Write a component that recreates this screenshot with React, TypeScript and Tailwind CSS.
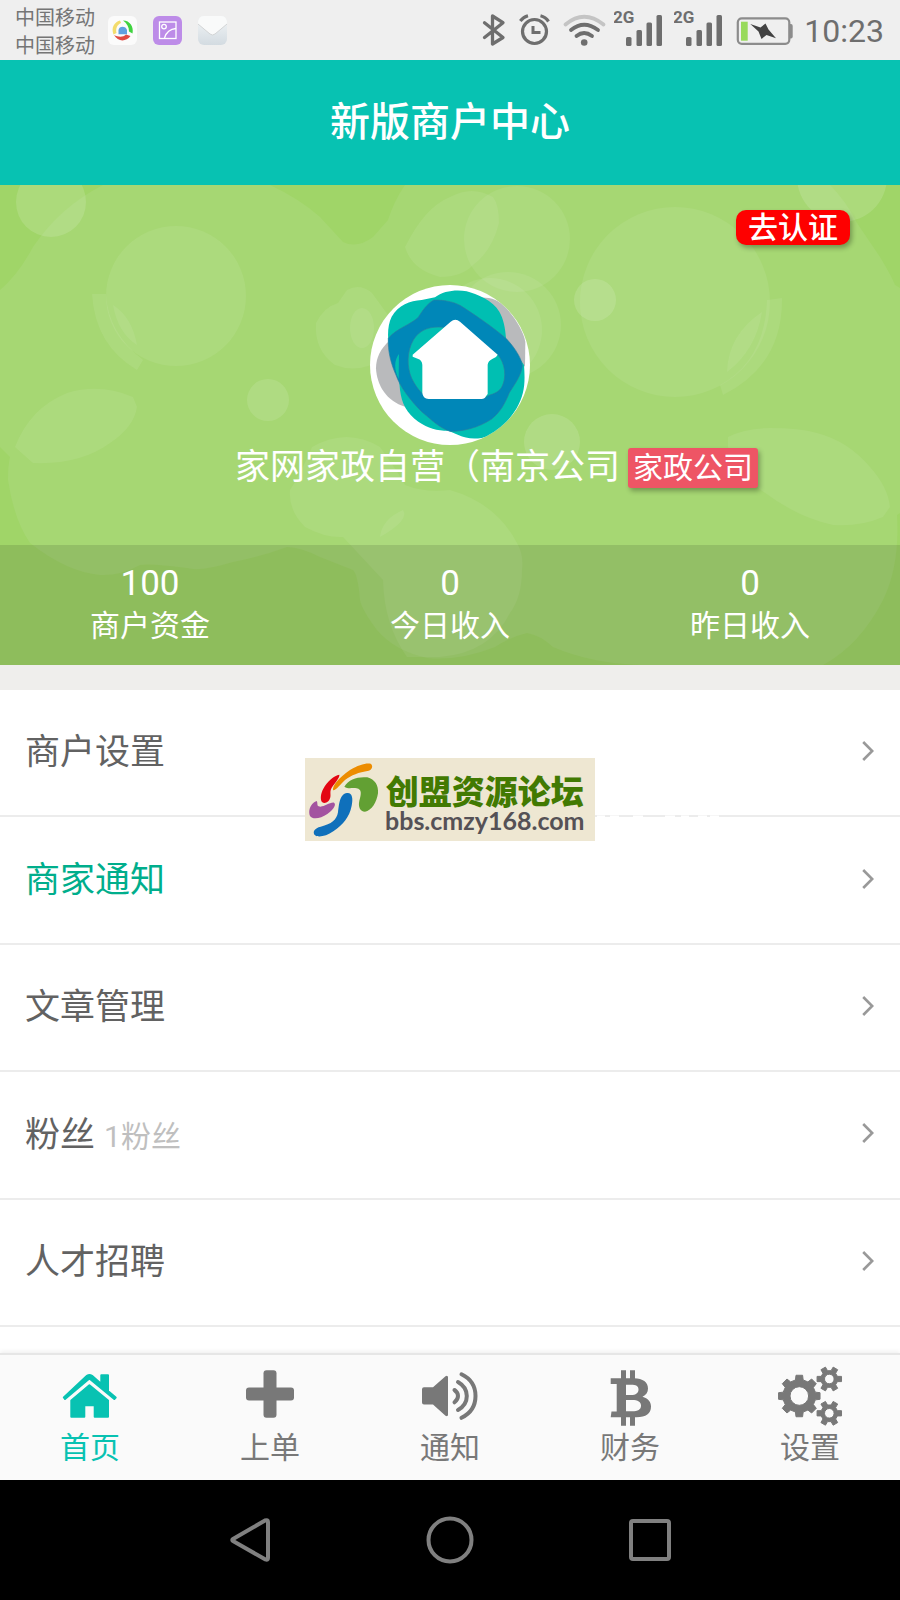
import type { ReactNode } from "react";

/* ---------- status bar ---------- */

function CallAppIcon() {
  return (
    <svg viewBox="0 0 29 29" className="size-[29px]" aria-hidden="true">
      <rect width="29" height="29" rx="6" fill="#fbfbfb" />
      <path d="M12 4.500C6 6 3 12 5.500 18.500L8.500 17C7.500 13 9 8.500 13 7Z" fill="#f3dc6c" />
      <path d="M15 4.500C22 4.500 26 11 24.500 17.500L21 15.500C21 11 19 7.500 15 4.500Z" fill="#3fd33f" />
      <path d="M6 19C10 26 18 26 22.500 20L18 18.500C15 21.500 10 21 6 19Z" fill="#e04a42" />
      <path d="M10.500 18.200V14C11 9.500 18 9.500 19 14V18.200Z" fill="#5fa0e0" />
    </svg>
  );
}

function GalleryIcon() {
  return (
    <svg viewBox="0 0 29 29" className="size-[29px]" fill="none" stroke="#fff" strokeWidth="1.300" aria-hidden="true">
      <rect width="29" height="29" rx="6" fill="#bd8ce8" stroke="none" />
      <rect x="6.500" y="6" width="16.500" height="16.500" />
      <circle cx="11" cy="10.600" r="2.300" />
      <path d="M11.500 22C13 17 17 13 23 12.500" />
    </svg>
  );
}

function MailIcon() {
  return (
    <svg viewBox="0 0 29 29" className="size-[29px]" aria-hidden="true">
      <defs>
        <linearGradient id="mail" x1="0" y1="0" x2="0" y2="1">
          <stop offset="0" stopColor="#f3f6f7" />
          <stop offset="1" stopColor="#d3dbe1" />
        </linearGradient>
      </defs>
      <rect width="29" height="29" rx="6" fill="url(#mail)" />
      <path d="M0 8Q0 0 6 0H23Q29 0 29 8L17 18Q14.500 20 12 18Z" fill="#f9fafa" />
      <path d="M0 8L12 18Q14.500 20 17 18L29 8" fill="none" stroke="#d2d4d5" strokeWidth="1" />
    </svg>
  );
}

function BluetoothIcon() {
  return (
    <svg viewBox="0 0 26 60" className="h-[60px] w-[26px]" fill="none" stroke="#6e6e6e" strokeWidth="3.300" strokeLinejoin="round" strokeLinecap="round" aria-hidden="true">
      <path d="M2.500 22.700L21 37.500L10.500 44V16L21 22.700L2.500 37.500" />
    </svg>
  );
}

function AlarmIcon() {
  return (
    <svg viewBox="0 0 34 60" className="h-[60px] w-[34px]" fill="none" stroke="#6e6e6e" strokeWidth="3.200" aria-hidden="true">
      <circle cx="16.500" cy="31.500" r="12" />
      <path d="M15 26V32.500H22.500" strokeWidth="3" />
      <path d="M2.300 21Q5.500 17 10 15.800M22.500 15.800Q27.500 17 30.500 21.500" />
    </svg>
  );
}

function WifiIcon() {
  return (
    <svg viewBox="0 0 42 60" className="h-[60px] w-[42px] overflow-visible" fill="none" stroke="#6e6e6e" strokeWidth="3.800" strokeLinecap="round" aria-hidden="true">
      <path d="M3.500 24.500Q22 9 41.500 24.500" stroke="#c4c4c4" />
      <path d="M9 30Q22 19.500 36 30" />
      <path d="M14.500 36Q22 30 30 36" />
      <circle cx="22.200" cy="42.500" r="3.300" fill="#6e6e6e" stroke="none" />
    </svg>
  );
}

function SignalIcon() {
  return (
    <svg viewBox="0 0 50 60" className="h-[60px] w-[50px]" fill="#6e6e6e" aria-hidden="true">
      <text x="-1" y="22.500" fontSize="17" fontWeight="700" fontFamily="Roboto, sans-serif">2G</text>
      <rect x="12" y="37" width="5.500" height="9" rx="1.500" />
      <rect x="22.500" y="30" width="5.500" height="16" rx="1.500" />
      <rect x="32.500" y="22.500" width="5.500" height="23.500" rx="1.500" />
      <rect x="42.500" y="15" width="5.500" height="31" rx="1.500" />
    </svg>
  );
}

function BatteryIcon() {
  return (
    <svg viewBox="0 0 60 60" className="size-[60px]" aria-hidden="true">
      <rect x="3.800" y="18.300" width="51.500" height="25.500" rx="4" fill="none" stroke="#8c8c8c" strokeWidth="2.200" />
      <path d="M56 24H57Q58.700 24 58.700 26V36.500Q58.700 38.500 57 38.500H56Z" fill="#8c8c8c" />
      <rect x="7" y="21.700" width="6.700" height="19" fill="#98da5b" />
      <path d="M16.300 24L26.500 27.500L31.500 23.500L34.500 29.500L42 38.200L32.500 35L27.500 39L24.500 31.500Z" fill="#424242" />
    </svg>
  );
}

function StatusBar() {
  return (
    <div className="flex h-[60px] items-center justify-between bg-[#efefef] pr-4 pl-[15px] text-[#757575]">
      <div className="flex items-center gap-4">
        <div className="-mr-[3px] pt-1 text-[20px] leading-7">
          <p>中国移动</p>
          <p>中国移动</p>
        </div>
        <CallAppIcon />
        <GalleryIcon />
        <MailIcon />
      </div>
      <div className="flex items-center gap-[10px]">
        <BluetoothIcon />
        <AlarmIcon />
        <WifiIcon />
        <SignalIcon />
        <SignalIcon />
        <BatteryIcon />
        <span className="pt-[2px] text-[32px] leading-[58px] text-[#6e6e6e]">10:23</span>
      </div>
    </div>
  );
}

/* ---------- merchant card ---------- */

function HeroBackground() {
  return (
    <svg viewBox="0 0 900 480" preserveAspectRatio="xMidYMid slice" className="absolute inset-0 size-full" aria-hidden="true">
      <rect width="900" height="480" fill="#a0d568" />
      <path
        fill="#a6d773"
        d="M0 105Q18 90 33 62Q60 22 103 0H270Q300 14 320 32L343 57Q357 64 373 52L388 35Q394 16 405 0H830Q846 16 857 38L880 72Q892 92 895 100L900 103V328L897 330Q900 380 883 415Q860 460 823 480H640Q590 478 553 462Q540 450 527 448Q510 452 495 462Q460 476 427 473Q395 466 377 445Q362 425 360 415Q358 390 353 385L320 372Q300 362 287 362Q260 372 233 377Q200 387 187 383Q150 378 140 380Q120 391 100 390Q67 387 30 358Q14 335 8 295Q8 280 10 272L0 262Z"
      />
      <g fill="#fff" fillOpacity="0.075">
        <circle cx="51" cy="17" r="35" fillOpacity="0.130" />
        <circle cx="176" cy="111" r="70" />
        <path d="M92 109H106Q108 148 143 175L137 185Q95 160 92 109Z" />
        <path d="M113 120Q132 132 137 160Q118 148 113 120Z" />
        <path d="M15 262Q30 223 67 208Q100 198 133 212L137 222Q134 242 110 258Q80 280 33 278Z" />
        <circle cx="268" cy="215" r="21" fillOpacity="0.110" />
        <path d="M347 105Q360 98 372 108L388 130Q400 150 385 172Q360 190 335 180Q314 165 316 138Q324 122 338 118Z" />
        <ellipse cx="362" cy="143" rx="12" ry="20" />
        <path d="M405 62Q425 22 450 12Q472 0 493 12Q499 20 499 38Q492 66 473 80Q462 92 440 92Q412 85 405 62Z" />
        <circle cx="517" cy="54" r="53" />
        <circle cx="508" cy="140" r="53" />
        <circle cx="490" cy="145" r="52" />
        <circle cx="675" cy="117" r="95" />
        <path d="M767 115L782 113Q783 180 723 210L720 200Q765 175 767 115Z" />
        <path d="M762 127Q756 165 727 187Q728 150 762 127Z" />
        <circle cx="595" cy="115" r="21" fillOpacity="0.130" />
        <circle cx="552" cy="257" r="28" fillOpacity="0.120" />
        <circle cx="842" cy="-8" r="45" fillOpacity="0.130" />
        <path d="M728 252Q745 243 770 243Q800 243 817 248Q848 256 870 282Q888 302 890 322L883 332Q860 342 833 340Q795 332 757 302Q738 280 728 262Z" />
        <path d="M312 262Q347 242 380 262Q400 290 405 300Q425 308 450 305Q496 318 517 358Q524 370 522 385Q522 412 510 428Q490 468 440 472H407Q384 440 383 395L343 352Q325 353 305 342Q288 325 290 305Q300 290 312 262Z" />
        <path d="M403 325Q410 335 380 352Q382 334 403 325Z" />
      </g>
    </svg>
  );
}

function MerchantLogo() {
  return (
    <svg viewBox="60 45 480 480" className="size-40 rounded-full bg-white" role="img" aria-label="家网家政">
      <path fill="#b9babc" d="M118 212C92 236 78 262 78 295C80 345 110 395 165 410L190 300Z" />
      <path fill="#b9babc" d="M380 83C420 80 445 88 470 115C500 150 520 185 526 215L525 290L460 230Z" />
      <path
        fill="#00bfb2"
        d="M215 90L255 82C280 62 320 58 350 64C380 72 430 92 448 125C460 145 466 175 468 205L522 285C526 340 524 370 500 415C475 455 440 495 395 504C365 508 345 504 325 495L295 482C260 482 235 475 205 455C170 430 155 400 150 360C148 320 135 290 122 255C112 215 110 170 125 140C145 105 180 92 215 90Z"
      />
      <path
        fill="#0087b8"
        stroke="#2a80a0"
        strokeWidth="2"
        d="M252 90C285 90 310 96 330 106C365 128 430 172 470 207C500 240 516 270 517 288C514 315 495 342 478 368C465 400 452 425 425 447C385 474 335 485 300 484C270 474 245 450 215 425C180 390 150 350 138 315C122 280 113 240 115 205C140 175 180 165 205 142C215 125 232 100 252 90Z"
      />
      <path
        fill="#00bfb2"
        stroke="#2a80a0"
        strokeWidth="2"
        d="M280 172C240 168 210 178 190 210C170 245 170 290 185 325C200 355 215 370 230 384H405C420 370 440 375 455 352C470 325 468 280 440 250Z"
      />
      <path fill="#00bfb2" d="M147 252C132 270 132 300 146 326Z" />
      <path
        fill="#fff"
        d="M302 155Q316 144 330 155L443 254Q440 262 428 266Q414 272 413 284V372L404 384Q400 387 394 387H236Q218 385 217 368V285Q216 271 205 267L188 260V254Z"
      />
    </svg>
  );
}

const stats = [
  { value: "100", label: "商户资金" },
  { value: "0", label: "今日收入" },
  { value: "0", label: "昨日收入" },
];

function MerchantCard() {
  return (
    <section className="relative flex h-[480px] flex-col overflow-hidden text-white">
      <HeroBackground />
      <div className="relative flex h-[100px] justify-end pt-[25px] pr-[50px]">
        <a href="#verify" className="h-[35px] rounded-[10px] bg-[#fe0000] px-[12px] text-[30px] leading-[35px] font-medium shadow-[2px_3px_5px_rgba(0,0,0,0.3)]">
          去认证
        </a>
      </div>
      <div className="relative flex flex-1 flex-col items-center">
        <MerchantLogo />
        <div className="flex items-center gap-2 pt-[1px] pl-[93px]">
          <h2 className="text-[35px] leading-[44px]">家网家政自营（南京公司</h2>
          <span className="h-10 rounded-[3px] bg-[#ee5565] px-[5px] text-[30px] leading-10 shadow-[2px_3px_5px_rgba(0,0,0,0.3)]">
            家政公司
          </span>
        </div>
      </div>
      <dl className="relative grid h-[120px] grid-cols-3 bg-black/11 pt-[18px] text-center">
        {stats.map((s) => (
          <div key={s.label} className="flex flex-col-reverse justify-end">
            <dt className="text-[30px] leading-[42px]">{s.label}</dt>
            <dd className="text-[35px] leading-[42px]">{s.value}</dd>
          </div>
        ))}
      </dl>
    </section>
  );
}

/* ---------- menu ---------- */

const menu = [
  { label: "商户设置" },
  { label: "商家通知", active: true },
  { label: "文章管理" },
  { label: "粉丝", note: "1粉丝" },
  { label: "人才招聘" },
];

function Chevron() {
  return (
    <svg viewBox="0 0 12 20" className="h-5 w-3" fill="none" stroke="#999" strokeWidth="2.600" aria-hidden="true">
      <path d="M1.200 1L10.200 10L1.200 19" />
    </svg>
  );
}

function ForumStamp() {
  return (
    <div className="absolute top-[68px] left-1/2 flex h-[83px] w-[290px] -translate-x-1/2 items-center bg-[#eee7d2] pl-[3px]">
      <svg viewBox="54 64 216 228" className="h-[76px] w-[72px] shrink-0" aria-hidden="true">
        <path fill="#ec8c00" d="M129 149C127 135 145 112 180 88C205 73 228 66 242 69C250 74 247 87 236 90C205 95 185 103 165 118C150 132 138 150 129 149Z" />
        <path fill="#e30613" d="M148 102C150 110 136 125 126 140C118 152 123 160 121 170C117 187 103 190 96 184C90 176 92 158 100 144C112 122 133 104 148 102Z" />
        <path fill="#a353a0" d="M80 181C84 186 80 195 86 197C100 202 118 184 132 186C140 192 130 208 112 220C92 234 68 238 60 226C53 212 62 186 80 181Z" />
        <path fill="#0f70bb" d="M171 157C186 155 190 172 185 195C178 230 160 250 130 272C108 288 84 291 75 284C66 274 74 262 92 258C125 250 140 238 144 215C147 195 148 160 171 157Z" />
        <path fill="#62a033" d="M163 138C176 115 205 107 232 110C255 116 266 135 264 158C260 185 245 210 225 213C210 212 204 198 208 180C214 160 216 146 200 143C186 140 175 146 163 138Z" />
      </svg>
      <div className="flex flex-col items-center pt-[6px] pl-[5px]">
        <span className="text-[33px] leading-[34px] font-black text-[#427a02]">创盟资源论坛</span>
        <span className="font-[Lato] text-[25px] leading-[20px] font-bold text-[#555156]">bbs.cmzy168.com</span>
      </div>
      <svg viewBox="0 0 130 6" className="absolute top-[56px] left-full h-[6px] w-[130px]" stroke="#fff" strokeWidth="2" aria-hidden="true">
        <path d="M2 2.500H10M15 2.500H24M38 2.500H48M70 2.500H80M86 2.500H94M103 2.500H112M115 2.500H124" />
      </svg>
    </div>
  );
}

function Menu() {
  return (
    <nav className="relative flex-1 bg-white" aria-label="商户菜单">
      <ul className="grid min-h-[637px] grid-rows-5">
        {menu.map((item) => (
          <li key={item.label} className="border-b-2 border-[#ececec]">
            <a href="#menu" className="flex h-full items-center justify-between pr-[26px] pb-[3px] pl-[25px]">
              <span className="flex items-baseline gap-[9px] pt-[5px]">
                <span className={item.active ? "text-[35px] text-[#00ae8c]" : "text-[35px] text-[#626262]"}>{item.label}</span>
                {item.note && <span className="text-[30px] text-[#bfbfbf]">{item.note}</span>}
              </span>
              <Chevron />
            </a>
          </li>
        ))}
      </ul>
      <ForumStamp />
    </nav>
  );
}

/* ---------- tab bar ---------- */

/** Closed outline of a cog with flat teeth, the first tooth pointing right. */
function gear(cx: number, cy: number, teeth: number, outer: number, inner: number, hole: number) {
  const step = (Math.PI * 2) / teeth;
  const at = (r: number, a: number) => `${(cx + r * Math.cos(a)).toFixed(2)} ${(cy + r * Math.sin(a)).toFixed(2)}`;
  const points: string[] = [];
  for (let i = 0; i < teeth; i++) {
    const a = i * step;
    points.push(at(inner, a - step * 0.3), at(outer, a - step * 0.2), at(outer, a + step * 0.2), at(inner, a + step * 0.3));
  }
  return `M${points.join("L")}ZM${cx + hole} ${cy}A${hole} ${hole} 0 1 0 ${cx - hole} ${cy}A${hole} ${hole} 0 1 0 ${cx + hole} ${cy}Z`;
}

const tabs: { label: string; active?: boolean; icon: ReactNode }[] = [
  {
    label: "首页",
    active: true,
    icon: (
      <g stroke="currentColor" strokeLinejoin="round" strokeWidth="2">
        <path d="M5.800 33.500L29 11.800Q31.400 10 34 11.800L43.300 20V11.300H50V27L57.700 33.600L56.300 35L31.400 14.500L7 35Z" />
        <path d="M31.400 21.300L50 36.500V52.700H36.700V41.300H26.300V52.700H13.300V36.500Z" />
      </g>
    ),
  },
  {
    label: "上单",
    icon: (
      <>
        <rect x="25.500" y="6.300" width="13" height="47.500" rx="3" />
        <rect x="8" y="23.500" width="48" height="13" rx="3" />
      </>
    ),
  },
  {
    label: "通知",
    icon: (
      <>
        <path d="M6 23.300H15L27.500 12.200Q30 10.800 30 13.500V50.500Q30 53.200 27.500 51.800L15 40.500H6Q4 40.500 4 38.500V25.300Q4 23.300 6 23.300Z" />
        <path
          d="M36.500 26Q40 28.500 40 32T36.500 38.300M40 18Q48.800 23 48.800 32T40 46M43.500 10.300Q57.500 17 57.500 32T43.500 53.800"
          fill="none"
          stroke="currentColor"
          strokeWidth="4"
          strokeLinecap="round"
        />
      </>
    ),
  },
  {
    label: "财务",
    icon: (
      <>
        <path d="M23 6.300H28V15H23ZM32 6.300H37V15H32ZM23 53H28V61.700H23ZM32 53H37V61.700H32Z" />
        <path
          fillRule="evenodd"
          d="M12.700 14.300H36C45 14.300 50 18.500 50 24.500C50 28.500 48 31 44.500 32.800C50 34.500 53 37.800 53 42.500C53 49.500 48 53.300 38.500 53.300H12.700L13.500 47.500H18.700V20H12.700ZM28 20.700V31H33C38 31 40.500 29 40.500 25.500C40.500 22 38 20.700 33 20.700ZM28 36V47.300H34C40 47.300 43 45.500 43 41.800C43 38 40 36 34 36Z"
        />
      </>
    ),
  },
  {
    label: "设置",
    icon: (
      <g fillRule="evenodd" stroke="currentColor" strokeWidth="1" strokeLinejoin="round">
        <path d={gear(21.3, 32, 8, 21, 16.5, 9.3)} />
        <path d={gear(51.3, 15, 6, 12.5, 8.5, 4.8)} />
        <path d={gear(51.3, 49.3, 6, 12.5, 8.5, 4.8)} />
      </g>
    ),
  },
];

function TabBar() {
  return (
    <nav
      className="relative grid h-[127px] grid-cols-5 border-t-2 border-[#e6e6e6] bg-[#fafafa] shadow-[0_-2px_4px_rgba(0,0,0,0.06)]"
      aria-label="主导航"
    >
      {tabs.map((tab) => (
        <a
          key={tab.label}
          href="#tab"
          className={
            tab.active
              ? "flex flex-col items-center pt-[9px] text-[#08c2b2]"
              : "flex flex-col items-center pt-[9px] text-[#787878]"
          }
        >
          <svg viewBox="0 0 64 64" className="size-16 overflow-visible" fill="currentColor" aria-hidden="true">
            {tab.icon}
          </svg>
          <span className="text-[30px] leading-10">{tab.label}</span>
        </a>
      ))}
    </nav>
  );
}

function SystemBar() {
  const glyphs = [
    { name: "返回", shape: <path d="M7 23L39 4.500Q42 3.500 42 6V42Q42 44.500 39.500 43.500L7 25Q5.500 24 7 23Z" /> },
    { name: "主屏幕", shape: <circle cx="24" cy="24" r="21.500" /> },
    { name: "最近任务", shape: <rect x="5" y="5" width="38" height="38" rx="2" /> },
  ];
  return (
    <div className="flex h-[120px] items-center justify-center bg-black">
      {glyphs.map((g) => (
        <button key={g.name} type="button" aria-label={g.name} className="flex h-full w-[200px] items-center justify-center">
          <svg viewBox="0 0 48 48" className="size-12" fill="none" stroke="#808080" strokeWidth="4" strokeLinejoin="round" aria-hidden="true">
            {g.shape}
          </svg>
        </button>
      ))}
    </div>
  );
}

export default function App() {
  return (
    <div className="flex min-h-screen flex-col bg-[#efeeec] font-[Roboto,'Noto_Sans_CJK_SC',sans-serif]">
      <StatusBar />
      <header className="flex h-[125px] items-center justify-center bg-[#07c2b2] text-white">
        <h1 className="text-[40px] leading-[50px] font-medium">新版商户中心</h1>
      </header>
      <MerchantCard />
      <div className="h-[25px]" />
      <Menu />
      <TabBar />
      <SystemBar />
    </div>
  );
}
